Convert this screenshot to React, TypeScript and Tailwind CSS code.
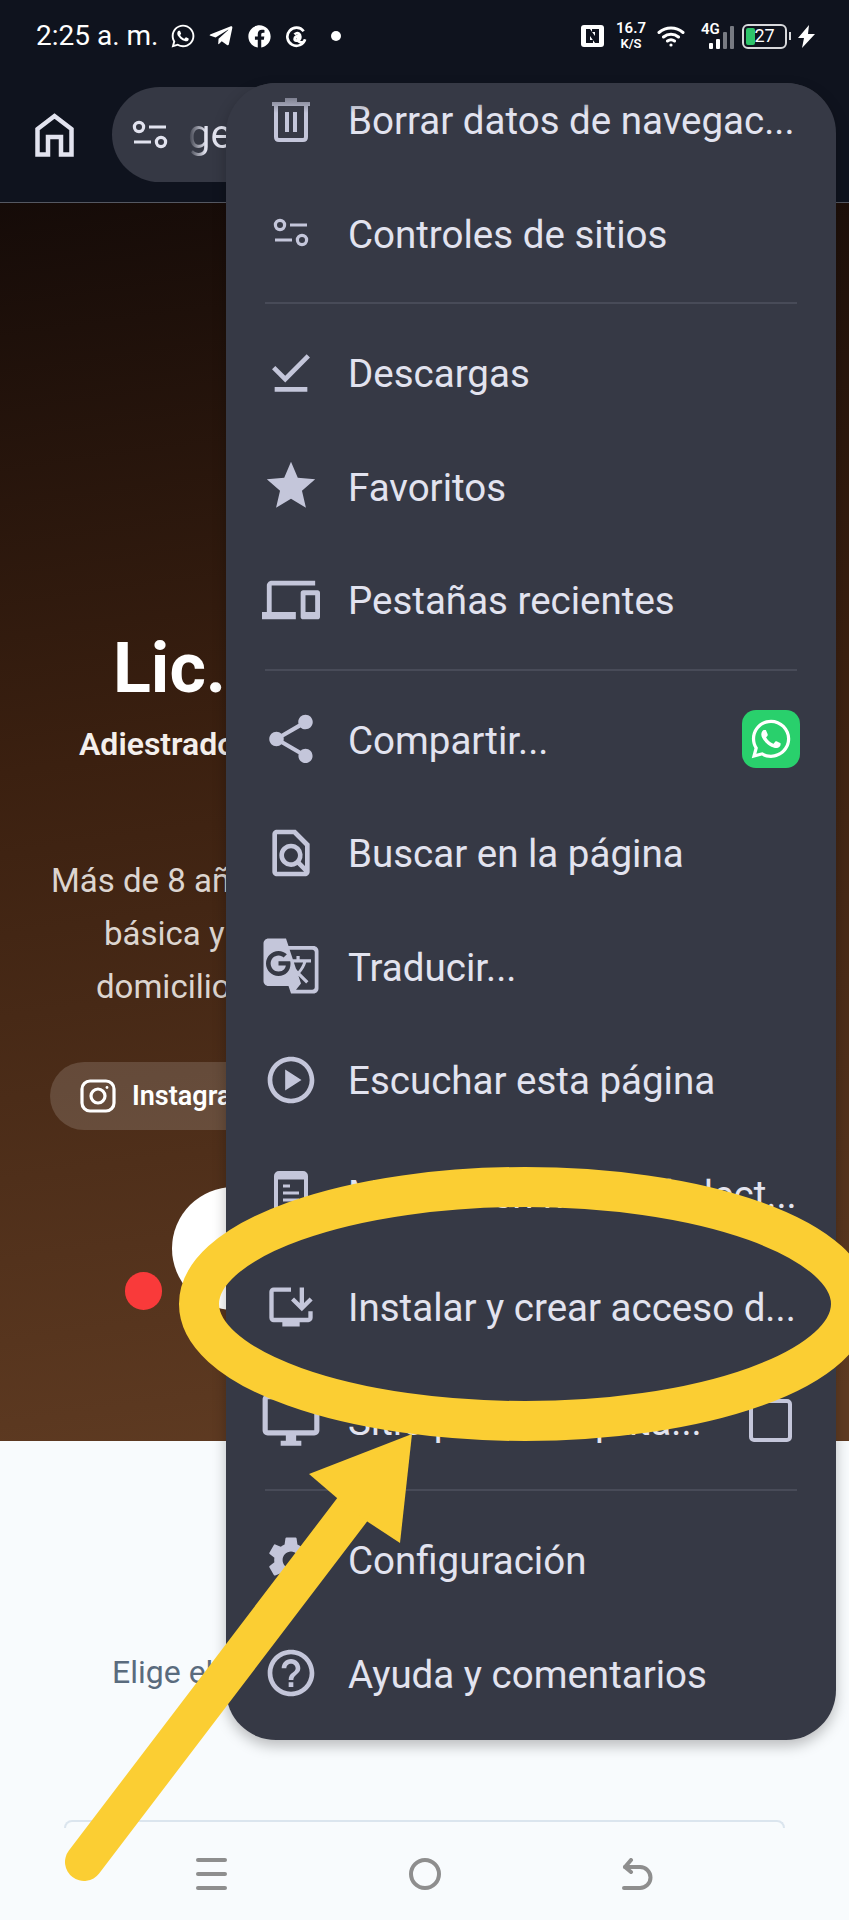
import type { ReactNode } from 'react'
import { FaWhatsapp, FaTelegramPlane, FaFacebook } from 'react-icons/fa'
import {
  MdDownloadDone,
  MdStar,
  MdOutlineDevices,
  MdShare,
  MdOutlineFindInPage,
  MdGTranslate,
  MdOutlinePlayCircle,
  MdOutlineInstallDesktop,
  MdOutlineDesktopWindows,
  MdSettings,
  MdHelpOutline,
} from 'react-icons/md'

function SiteControls({ className }: { className: string }) {
  return (
    <svg viewBox="0 0 36 30" fill="none" stroke="currentColor" strokeWidth="3.2" className={className}>
      <circle cx="7" cy="7" r="4.6" />
      <path d="M17 7h17M2 22h17" />
      <circle cx="29" cy="22" r="4.6" />
    </svg>
  )
}

function Trash() {
  return (
    <svg viewBox="0 0 38 44" className="h-[44px] w-[38px]" fill="none" stroke="currentColor" strokeWidth="4">
      <path d="M0 6h38M13 2h12" />
      <path d="M4 7v32q0 3 3 3h24q3 0 3-3V7" />
      <path d="M15 14v20M23 14v20" />
    </svg>
  )
}

function ReaderIcon() {
  return (
    <svg viewBox="0 0 34 46" className="h-[46px] w-[34px]" fill="none" stroke="currentColor" strokeWidth="4">
      <rect x="2" y="3" width="30" height="42" rx="3" />
      <path d="M2 6h30" strokeWidth="7" />
      <path d="M9 16h7M9 23h16M9 30h16" strokeWidth="3" />
    </svg>
  )
}

function Row({ icon, label, trailing }: { icon: ReactNode; label: string; trailing?: ReactNode }) {
  return (
    <div className="flex h-[113.5px] items-center pl-[45px] pr-[36px]">
      <div className="flex w-[40px] shrink-0 items-center justify-center text-[#c4c6da] [&>svg]:shrink-0">{icon}</div>
      <span className="ml-[37px] flex-1 whitespace-nowrap pt-[3px] text-[38.5px] text-[#e2e3ef]">{label}</span>
      {trailing}
    </div>
  )
}

function Divider() {
  return (
    <div className="flex h-[26px] items-center px-[39px]">
      <div className="h-[2px] w-full bg-[#484b58]" />
    </div>
  )
}

function ChromeMenu() {
  return (
    <div className="absolute left-[226px] top-[83px] z-10 h-[1657px] w-[610px] overflow-hidden rounded-[50px] bg-[#363945] shadow-[0_6px_14px_rgba(0,0,0,0.25)]">
      <div className="absolute inset-x-0 top-0 h-[30px] bg-gradient-to-b from-[#363945] to-transparent" />
      <div className="-mt-[20px]">
        <Row icon={<Trash />} label="Borrar datos de navegac..." />
        <Row icon={<SiteControls className="h-[30px] w-[36px]" />} label="Controles de sitios" />
        <Divider />
        <Row icon={<MdDownloadDone size={56} />} label="Descargas" />
        <Row icon={<MdStar size={58} />} label="Favoritos" />
        <Row icon={<MdOutlineDevices size={58} />} label="Pestañas recientes" />
        <Divider />
        <Row
          icon={<MdShare size={58} />}
          label="Compartir..."
          trailing={
            <div className="flex h-[58px] w-[58px] items-center justify-center rounded-[14px] bg-[#29d06c] text-white">
              <FaWhatsapp size={44} />
            </div>
          }
        />
        <Row icon={<MdOutlineFindInPage size={56} />} label="Buscar en la página" />
        <Row icon={<MdGTranslate size={60} />} label="Traducir..." />
        <Row icon={<MdOutlinePlayCircle size={56} />} label="Escuchar esta página" />
        <Row icon={<ReaderIcon />} label="Mostrar en modo de lect..." />
        <Row icon={<MdOutlineInstallDesktop size={52} />} label="Instalar y crear acceso d..." />
        <Row
          icon={<MdOutlineDesktopWindows size={62} />}
          label="Sitio para computa..."
          trailing={<div className="mr-[8px] h-[43px] w-[43px] rounded-[5px] border-[4px] border-[#c4c6da]" />}
        />
        <Divider />
        <Row icon={<MdSettings size={56} />} label="Configuración" />
        <Row icon={<MdHelpOutline size={56} />} label="Ayuda y comentarios" />
      </div>
    </div>
  )
}

function StatusBar() {
  return (
    <div className="flex h-[72px] items-center justify-between pl-[36px] pr-[34px] text-white">
      <div className="flex items-center">
        <span className="whitespace-nowrap text-[28px]">2:25 a. m.</span>
        <FaWhatsapp size={26} className="ml-[12px]" />
        <FaTelegramPlane size={26} className="ml-[12px]" />
        <FaFacebook size={23} className="ml-[14px]" />
        {/* threads style at mark */}
        <svg viewBox="0 0 22 22" className="ml-[15px] h-[23px] w-[21px]" fill="none" stroke="currentColor" strokeWidth="2.8">
          <path d="M18.5 5.5A9.5 9.5 0 1 0 20 14c-.5 2.5-3 3.5-5 3-4-1-3.5-6 .5-6.5-4-.5-6.5 1-6.5 3 0 2 3.5 2.5 5 1 1.5-1.5 1.5-5-.5-6.5-1.5-1-3.5-.5-4.5 1" />
        </svg>
        <div className="ml-[24px] h-[10px] w-[10px] rounded-full bg-white" />
      </div>
      <div className="flex items-center">
        <svg viewBox="0 0 23 22" className="h-[22px] w-[23px]">
          <rect width="23" height="22" rx="3" fill="white" />
          <path d="M5 4h4l5 7V7h-3V4h7v14h-4l-5-7v4h3v3H5z" fill="#0f131e" />
        </svg>
        <div className="ml-[12px] flex flex-col items-center text-[15px] font-semibold leading-[15px]">
          <span>16.7</span>
          <span className="text-[13px]">K/S</span>
        </div>
        <svg viewBox="0 0 28 22" className="ml-[11px] h-[22px] w-[28px]" fill="none" stroke="currentColor" strokeWidth="3" strokeLinecap="round">
          <path d="M2 7.5c7-6 17-6 24 0M6.5 12c4.500-3.800 10.500-3.800 15 0M10.500 16c2-1.500 5-1.500 7 0" />
          <circle cx="14" cy="20" r="1.600" fill="currentColor" stroke="none" />
        </svg>
        <div className="relative ml-[16px] h-[26px] w-[33px] text-[15px] font-semibold leading-[13px]">
          <span>4G</span>
          <div className="absolute bottom-0 left-[8px] flex items-end gap-[3px]">
            <div className="h-[6px] w-[4px] rounded-[1px] bg-white" />
            <div className="h-[10px] w-[4px] rounded-[1px] bg-white" />
            <div className="h-[17px] w-[4px] rounded-[1px] bg-[#777a82]" />
            <div className="h-[23px] w-[4px] rounded-[1px] bg-[#777a82]" />
          </div>
        </div>
        <div className="relative ml-[8px] flex h-[25px] w-[45px] items-center justify-center rounded-[6px] border-2 border-[#d8d9dc]">
          <div className="absolute bottom-[2px] left-[2px] top-[2px] w-[9px] rounded-[2px] bg-[#2ec46a]" />
          <span className="relative text-[18px] leading-none">27</span>
        </div>
        <div className="ml-[2px] h-[8px] w-[2px] bg-[#d8d9dc]" />
        <svg viewBox="0 0 17 23" className="ml-[7px] h-[23px] w-[17px]" fill="currentColor">
          <path d="M11 0 0 13h6l-2 10L17 9h-7z" />
        </svg>
      </div>
    </div>
  )
}

function ToolBar() {
  return (
    <div className="flex h-[130px] items-start pl-[35px] pr-[20px] pt-[15px]">
      <svg viewBox="0 0 39 44" className="mt-[26px] h-[44px] w-[39px] text-[#e2e3ef]" fill="none" stroke="currentColor" strokeWidth="4.500">
        <path d="M2.500 41.500V16L19.500 3l17 13v25.500H26V24H13v17.500z" />
      </svg>
      <div className="ml-[38px] flex h-[95px] flex-1 items-center rounded-full bg-[#353844] pl-[20px] text-[#e2e3ef]">
        <SiteControls className="h-[30px] w-[36px]" />
        <span className="ml-[20px] bg-gradient-to-r from-transparent to-[#e2e3ef] to-40% bg-clip-text text-[40px] text-transparent">
          ge
        </span>
      </div>
    </div>
  )
}

function Hero() {
  return (
    <div className="h-[1238px] overflow-hidden bg-[linear-gradient(172deg,#150b08_0%,#3b2010_42%,#5f3b22_96%)] pt-[425px] text-white">
      <div className="ml-[113px] whitespace-nowrap text-[70px] font-bold leading-[80px]">Lic.</div>
      <div className="ml-[79px] mt-[18px] whitespace-nowrap text-[32px] font-semibold leading-[36px] text-[#f4efec]">
        Adiestrador
      </div>
      <div className="mt-[92px] whitespace-nowrap text-[33px] leading-[53px] text-[#dcd5d0]">
        <div className="ml-[51px]">Más de 8 años</div>
        <div className="ml-[104px]">básica y</div>
        <div className="ml-[96px]">domicilio</div>
      </div>
      <div className="ml-[50px] mt-[49px] flex h-[68px] w-[400px] items-center rounded-full bg-white/15 pl-[30px]">
        <svg viewBox="0 0 36 36" className="h-[36px] w-[36px]" fill="none" stroke="currentColor" strokeWidth="3.200">
          <rect x="2" y="3" width="32" height="30" rx="8" />
          <circle cx="18" cy="18" r="7" />
          <circle cx="27" cy="9.500" r="1.400" fill="currentColor" stroke="none" />
        </svg>
        <span className="ml-[16px] text-[27px] font-semibold">Instagram</span>
      </div>
      <div className="ml-[125px] mt-[57px] flex items-end gap-[10px]">
        <div className="h-[38px] w-[37px] rounded-full bg-[#f93a3a]" />
        <div className="h-[123px] w-[300px] rounded-full bg-white" />
      </div>
    </div>
  )
}

function BottomArea() {
  return (
    <div className="flex flex-1 flex-col bg-[#f8fbfd]">
      <div className="ml-[112px] mt-[211px] whitespace-nowrap text-[32px] leading-[40px] text-[#5a6b7d]">Elige el</div>
      <div className="mx-[64px] mt-[128px] h-[8px] rounded-t-[26px] border-x-2 border-t-2 border-[#dbe5ee]" />
      <div className="flex flex-1 items-center justify-between px-[196px] text-[#8e8e8e]">
        <div className="flex h-[32px] w-[31px] flex-col justify-between">
          <div className="h-[4px] rounded-full bg-current" />
          <div className="h-[4px] rounded-full bg-current" />
          <div className="h-[4px] rounded-full bg-current" />
        </div>
        <div className="h-[32px] w-[32px] rounded-full border-[4px] border-current" />
        <svg viewBox="0 0 31 32" className="h-[32px] w-[31px]" fill="none" stroke="currentColor" strokeWidth="4" strokeLinecap="round" strokeLinejoin="round">
          <path d="M2 30h16a10.500 10.500 0 0 0 0-21H3" />
          <path d="M9 2 3 9l6 5" />
        </svg>
      </div>
    </div>
  )
}

export default function App() {
  return (
    <div className="relative flex h-[1920px] w-[849px] flex-col overflow-hidden bg-[#f8fbfd] font-['Roboto',sans-serif]">
      <div className="bg-[#0f131e]">
        <StatusBar />
        <ToolBar />
        <div className="h-[1px] bg-[#555862]" />
      </div>
      <Hero />
      <BottomArea />
      <ChromeMenu />
      {/* yellow hand-drawn annotation */}
      <svg viewBox="0 0 849 1920" className="absolute inset-0 z-20 h-[1920px] w-[849px]" fill="none">
        <ellipse cx="525" cy="1304" rx="326" ry="117" stroke="#fbce33" strokeWidth="40" />
        <path d="M84 1862 352 1510" stroke="#fbce33" strokeWidth="38" strokeLinecap="round" />
        <path d="M412 1434 309 1474 337 1498 368 1522 400 1543z" fill="#fbce33" />
      </svg>
    </div>
  )
}
